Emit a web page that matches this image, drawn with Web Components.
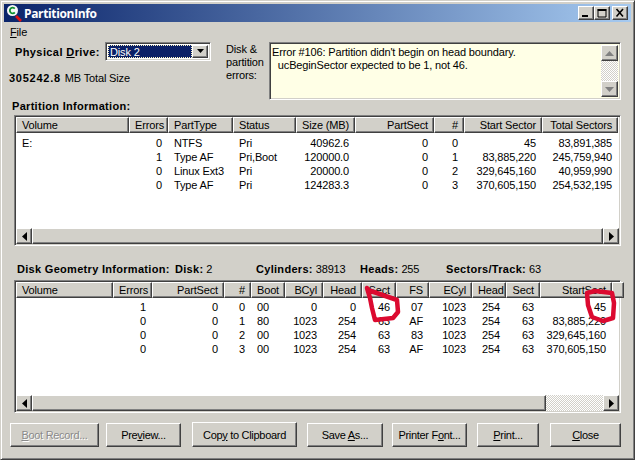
<!DOCTYPE html>
<html>
<head>
<meta charset="utf-8">
<title>PartitionInfo</title>
<style>
	html, body { margin: 0; padding: 0; background: #d2d0c9; }
</style>
</head>
<body>
<pi-app></pi-app>
<script>
const FACE = '#d2d0c9';
const SUNKEN = `border: 1px solid; border-color: #808080 #fff #fff #808080; box-shadow: inset 1px 1px 0 #404040, inset -1px -1px 0 ${FACE};`;
const RAISED = `border: 1px solid; border-color: #fff #404040 #404040 #fff; box-shadow: inset -1px -1px 0 #808080;`;
const DITHER = `background: repeating-conic-gradient(#fff 0 25%, ${FACE} 0 50%) 0 0 / 2px 2px;`;
const TEXT = `font: 11px "Liberation Sans", sans-serif; letter-spacing: -.15px;`;

customElements.define('pi-titlebar', class extends HTMLElement {
	connectedCallback() {
		this.attachShadow({mode: 'open'});
		this.shadowRoot.innerHTML = `
			<style>
				:host { display: flex; align-items: center; height: 18px; padding: 0 3px 0 2px;
					background: linear-gradient(90deg, #0a246a, #a6caf0); color: #fff;
					font: bold 12px "Open Sans", sans-serif; }
				svg.icon { flex: none; margin-right: 1px; }
				.title { flex: 1; letter-spacing: -.35px; }
				.ctl { flex: none; width: 14px; height: 12px; background: ${FACE}; ${RAISED} display: flex; }
				.ctl svg { display: block; }
				.ctl.close { margin-left: 2px; }
			</style>
			<svg class="icon" width="17" height="18" viewBox="0 0 17 18">
				<path d="M10 12l5 5" stroke="#e01010" stroke-width="2.6" fill="none"/>
				<circle cx="6.500" cy="6.500" r="5.500" fill="#f8f8f8"/>
				<path d="M8.800 4.700A2.800 2.800 0 1 0 8.800 8.300" stroke="#109030" stroke-width="1.800" fill="none"/>
			</svg>
			<span class="title"><slot></slot></span>
			<span class="ctl"><svg width="14" height="12"><rect x="3" y="8" width="6" height="2"/></svg></span>
			<span class="ctl"><svg width="14" height="12"><path d="M3 2.500h8v7.500H3zM3 2v1.500h8V2" fill="none" stroke="#000"/></svg></span>
			<span class="ctl close"><svg width="14" height="12"><path d="M3.500 2l6.500 7.500M10 2L3.500 9.500" stroke="#000" stroke-width="1.600" fill="none"/></svg></span>
		`;
	}
});

customElements.define('pi-window', class extends HTMLElement {
	connectedCallback() {
		this.attachShadow({mode: 'open'});
		this.shadowRoot.innerHTML = `
			<style>
				:host { display: block; position: relative; box-sizing: border-box; width: 635px; height: 460px; background: ${FACE};
					border: 1px solid; border-color: ${FACE} #404040 #404040 ${FACE};
					box-shadow: inset 1px 1px 0 #fff, inset -1px -1px 0 #808080; padding: 3px; overflow: hidden; }
			</style>
			<pi-titlebar>${this.getAttribute('caption')}</pi-titlebar>
			<slot></slot>
		`;
	}
});

customElements.define('pi-button', class extends HTMLElement {
	connectedCallback() {
		this.attachShadow({mode: 'open'});
		this.shadowRoot.innerHTML = `
			<style>
				:host { display: flex; align-items: center; justify-content: center; box-sizing: border-box; height: 24px; ${RAISED}
					background: ${FACE}; ${TEXT} letter-spacing: -.3px; color: #000; }
				:host([disabled]) { color: #8a8a8a; text-shadow: 1px 1px 0 #fff; }
				:host([tall]) { height: 25px; }
			</style>
			<span><slot></slot></span>
		`;
	}
});

customElements.define('pi-combo', class extends HTMLElement {
	connectedCallback() {
		this.attachShadow({mode: 'open'});
		this.shadowRoot.innerHTML = `
			<style>
				:host { display: flex; box-sizing: border-box; width: 106px; height: 19px; ${SUNKEN} padding: 2px; background: #fff;
					${TEXT} }
				.value { flex: 1; background: #0a1f66; color: #fff; line-height: 13px; padding: 1px 2px;
					outline: 1px dotted #fff6c0; outline-offset: -1px; }
				.drop { flex: none; box-sizing: border-box; width: 16px; background: ${FACE}; ${RAISED}
					display: flex; align-items: center; justify-content: center; }
			</style>
			<span class="value"><slot></slot></span>
			<span class="drop"><svg width="9" height="5"><path d="M1 0h7L4.500 4z"/></svg></span>
		`;
	}
});

customElements.define('pi-vscroll', class extends HTMLElement {
	connectedCallback() {
		this.attachShadow({mode: 'open'});
		this.shadowRoot.innerHTML = `
			<style>
				:host { display: flex; flex-direction: column; flex: none; width: 17px; ${DITHER} }
				.btn { flex: none; box-sizing: border-box; height: 16px; background: ${FACE}; ${RAISED}
					display: flex; align-items: center; justify-content: center; }
				.track { flex: 1; }
				path { fill: #808080; }
			</style>
			<span class="btn"><svg width="9" height="5"><path d="M4.500 0L9 5H0z"/></svg></span>
			<span class="track"></span>
			<span class="btn"><svg width="9" height="5"><path d="M0 0h9L4.500 5z"/></svg></span>
		`;
	}
});

customElements.define('pi-hscroll', class extends HTMLElement {
	connectedCallback() {
		this.attachShadow({mode: 'open'});
		const thumb = this.getAttribute('thumb');
		this.shadowRoot.innerHTML = `
			<style>
				:host { display: flex; flex: none; height: 16px; box-shadow: 0 -1px 0 #fff; ${DITHER} }
				.btn { flex: none; box-sizing: border-box; width: 16px; background: ${FACE}; ${RAISED}
					display: flex; align-items: center; justify-content: center; }
				.thumb { box-sizing: border-box; background: ${FACE}; ${RAISED} }
				.thumb { ${thumb ? `flex: none; width: ${thumb}px;` : 'flex: 1;'} }
				.track { ${thumb ? 'flex: 1;' : 'display: none;'} }
			</style>
			<span class="btn"><svg width="5" height="9"><path d="M5 0v9L0 4.500z"/></svg></span>
			<span class="thumb"></span>
			<span class="track"></span>
			<span class="btn"><svg width="5" height="9"><path d="M0 0v9l5-4.500z"/></svg></span>
		`;
	}
});

// cols: "Name:width:align,..."   rows: cells split by | and rows by ;
customElements.define('pi-listview', class extends HTMLElement {
	connectedCallback() {
		this.attachShadow({mode: 'open'});
		const cols = this.getAttribute('cols').split(',').map(c => c.split(':'));
		const rows = this.getAttribute('rows').split(';').map(r => r.split('|'));
		const tpl = cols.map(c => c[1] + 'px').join(' ');
		const head = cols.map(c => `<div class="hd ${c[2]}">${c[0]}</div>`).join('');
		const body = rows.map(r => `<div class="row">${cols.map((c, i) => `<div class="cell ${c[2]}">${r[i] || ''}</div>`).join('')}</div>`).join('');
		this.shadowRoot.innerHTML = `
			<style>
				:host { display: flex; flex-direction: column; box-sizing: border-box; ${SUNKEN} padding: 1px; background: #fff;
					${TEXT} color: #000; }
				.head, .row { display: grid; grid-template-columns: ${tpl}; }
				.head { flex: none; height: 16px; }
				.hd { box-sizing: border-box; background: ${FACE}; ${RAISED} line-height: 15px; padding: 0 5px; white-space: nowrap; overflow: hidden; }
				.rows { flex: 1; padding-top: var(--rows-top, 3px); }
				.row { height: 14px; line-height: 14px; }
				.cell { padding: 0 6px; white-space: nowrap; overflow: hidden; }
				.l { text-align: left; }
				.r { text-align: right; }
			</style>
			<div class="head">${head}</div>
			<div class="rows">${body}</div>
			<pi-hscroll ${this.hasAttribute('thumb') ? `thumb="${this.getAttribute('thumb')}"` : ''}></pi-hscroll>
		`;
	}
});

customElements.define('pi-memo', class extends HTMLElement {
	connectedCallback() {
		this.attachShadow({mode: 'open'});
		this.shadowRoot.innerHTML = `
			<style>
				:host { display: flex; box-sizing: border-box; flex: 1; height: 58px; ${SUNKEN} padding: 2px; background: #ffffe6;
					${TEXT} }
				.text { flex: 1; padding: 1px 0; line-height: 13px; white-space: pre; }
			</style>
			<div class="text"><slot></slot></div>
			<pi-vscroll></pi-vscroll>
		`;
	}
});

customElements.define('pi-app', class extends HTMLElement {
	connectedCallback() {
		this.attachShadow({mode: 'open'});
		this.shadowRoot.innerHTML = `
			<style>
				:host { display: block; ${TEXT} color: #000; }
				.menu { height: 20px; line-height: 20px; padding: 0 6px; }
				.content { padding: 0 10px 0 10px; }
				.top { display: flex; height: 58px; }
				.left { flex: none; width: 212px; }
				.drive { display: flex; align-items: center; height: 19px; margin-left: 1px; }
				.drive b { width: 90px; letter-spacing: .4px; }
				b { letter-spacing: .3px; }
				.total { margin: 10px 0 0 -5px; line-height: 14px; }
				.total b { letter-spacing: .75px; margin-right: 1px; }
				.errlabel { flex: none; width: 43px; line-height: 13px; padding-top: 1px; }
				h2 { font: inherit; font-weight: bold; margin: 0; line-height: 12px; letter-spacing: .3px; }
				.sec1 { margin: 0 0 3px -2px; }
				.list1 { height: 131px; }
				.geo { display: flex; height: 14px; line-height: 14px; margin: 16px 0 4px 3px; white-space: nowrap; }
				.geo span { flex: none; }
				.list2 { height: 133px; --rows-top: 2px; }
				.buttons { display: flex; align-items: flex-end; height: 25px; margin: 9px 0 0 -4px; }
				.marks { position: absolute; left: -1px; top: -1px; pointer-events: none; }
				.marks path { fill: none; stroke: #dc0a30; stroke-width: 4.5; stroke-linejoin: round; stroke-linecap: round; }
			</style>
			<pi-window caption="PartitionInfo">
				<div class="menu"><u>F</u>ile</div>
				<div class="content">
					<div class="top">
						<div class="left">
							<div class="drive"><b>Physical <u>D</u>rive:</b><pi-combo>Disk 2</pi-combo></div>
							<div class="total"><b>305242.8</b> MB Total Size</div>
						</div>
						<div class="errlabel">Disk &amp;<br>partition<br>errors:</div>
						<pi-memo>Error #106: Partition didn't begin on head boundary.
  ucBeginSector expected to be 1, not 46.</pi-memo>
					</div>
					<h2 class="sec1">Partition Information:</h2>
					<pi-listview class="list1"
						cols="Volume:113:l,Errors:39:r,PartType:65:l,Status:63:l,Size (MB):59:r,PartSect:79:r,#:30:r,Start Sector:78:r,Total Sectors:76:r"
						rows="E:|0|NTFS|Pri|40962.6|0|0|45|83,891,385;|1|Type AF|Pri,Boot|120000.0|0|1|83,885,220|245,759,940;|0|Linux Ext3|Pri|20000.0|0|2|329,645,160|40,959,990;|0|Type AF|Pri|124283.3|0|3|370,605,150|254,532,195"></pi-listview>
					<div class="geo">
						<span style="width:158px"><b>Disk Geometry Information:</b></span>
						<span style="width:81px"><b>Disk:</b> 2</span>
						<span style="width:104px"><b>Cylinders:</b> 38913</span>
						<span style="width:86px"><b>Heads:</b> 255</span>
						<span><b>Sectors/Track:</b> 63</span>
					</div>
					<pi-listview class="list2" thumb="514"
						cols="Volume:97:l,Errors:39:r,PartSect:72:r,#:27:r,Boot:34:l,BCyl:38:r,Head:39:r,Sect:34:r,FS:33:r,ECyl:43:r,Head:34:r,Sect:34:r,StartSect:72:r,:6:l"
						rows="|1|0|0|00|0|0|46|07|1023|254|63|45;|0|0|1|80|1023|254|63|AF|1023|254|63|83,885,220;|0|0|2|00|1023|254|63|83|1023|254|63|329,645,160;|0|0|3|00|1023|254|63|AF|1023|254|63|370,605,150"></pi-listview>
					<div class="buttons">
						<pi-button disabled style="width:89px;margin-right:7px"><u>B</u>oot Record...</pi-button>
						<pi-button style="width:75px;margin-right:11px">Pre<u>v</u>iew...</pi-button>
						<pi-button tall style="width:105px;margin-right:10px">Cop<u>y</u> to Clipboard</pi-button>
						<pi-button style="width:76px;margin-right:9px">Save <u>A</u>s...</pi-button>
						<pi-button style="width:75px;margin-right:10px">Printer F<u>o</u>nt...</pi-button>
						<pi-button style="width:62px;margin-right:11px"><u>P</u>rint...</pi-button>
						<pi-button style="width:71px"><u>C</u>lose</pi-button>
					</div>
				</div>
				<svg class="marks" width="635" height="460">
					<path d="M367 288L370 298 372 308 375 320 393 318 398 312 397 300 368 290"/>
					<path d="M587 293L595 291 612 293 614 303 613 318 603 321 592 317 588 305 587 293"/>
				</svg>
			</pi-window>
		`;
	}
});
</script>
</body>
</html>
